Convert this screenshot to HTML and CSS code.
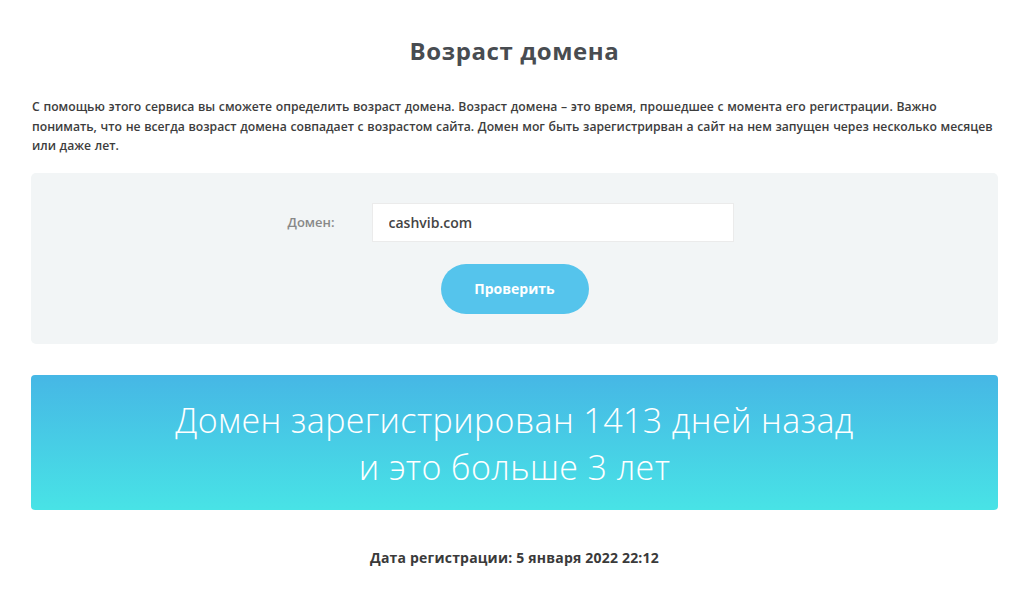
FILE: index.html
```html
<!DOCTYPE html>
<html>
 <head>
  <meta charset="utf-8">
  <title>Возраст домена</title>
  <meta name="viewport" content="width=device-width, initial-scale=1.0">
  <link rel="stylesheet" href="styles.css">
 </head>
<body>

<div class="page">

  <h1 class="title">Возраст домена</h1>

  <p class="intro">С помощью этого сервиса вы сможете определить возраст домена. Возраст домена – это время, прошедшее с момента его регистрации. Важно понимать, что не всегда возраст домена совпадает с возрастом сайта. Домен мог быть зарегистрирван а сайт на нем запущен через несколько месяцев или даже лет.</p>

  <form class="check-form" onsubmit="return false">
    <div class="form-row">
      <label for="domain">Домен:</label>
      <input type="text" id="domain" name="domain" value="cashvib.com">
    </div>
    <button type="submit" class="check-btn">Проверить</button>
  </form>

  <div class="result">
    <p>Домен зарегистрирован 1413 дней назад<br>и это больше 3 лет</p>
  </div>

  <p class="reg-date">Дата регистрации: 5 января 2022 22:12</p>

</div>

</body>
</html>
```

FILE: styles.css
```css
* {
  box-sizing: border-box;
}

body {
  margin: 0;
  font-family: "Open Sans", Arial, sans-serif;
  color: #333;
  background: #fff;
}

.page {
  width: 967px;
  margin-left: 31px;
  padding-bottom: 20px;
}

/* heading */
.title {
  margin: 0;
  padding-top: 36px;
  text-align: center;
  font-size: 24px;
  line-height: 30px;
  font-weight: 700;
  letter-spacing: 0.6px;
  color: #484c51;
}

.intro {
  margin: 31px 0 0 1px;
  font-size: 12.2px;
  line-height: 19.5px;
  font-weight: 600;
  word-spacing: 0.5px;
  color: #3d3d3d;
}

/* form box */
.check-form {
  margin-top: 17px;
  background: #f2f5f6;
  border-radius: 5px;
  padding: 30px 0 30px 0;
  display: flex;
  flex-direction: column;
  align-items: center;
}

.form-row {
  display: flex;
  align-items: center;
  margin-left: -8px;
}

.form-row label {
  width: 84px;
  font-size: 13px;
  color: #888;
  font-weight: 600;
}

.form-row input {
  width: 362px;
  height: 39px;
  border: 1px solid #ebebeb;
  background: #fff;
  padding: 0 16px;
  font-family: inherit;
  font-size: 14px;
  font-weight: 600;
  color: #444;
  outline: none;
}

.check-btn {
  margin-top: 22px;
  width: 148px;
  height: 50px;
  border: none;
  border-radius: 25px;
  background: #55c4ec;
  color: #fff;
  font-family: inherit;
  font-size: 14px;
  font-weight: 700;
  cursor: pointer;
}

/* result banner */
.result {
  margin-top: 31px;
  height: 135px;
  border-radius: 4px;
  background: linear-gradient(to bottom, #46b7e5, #48e3e6);
  display: flex;
  align-items: center;
  justify-content: center;
}

.result p {
  margin: 0;
  padding-top: 4px;
  text-align: center;
  color: #fff;
  font-size: 34px;
  line-height: 47px;
  letter-spacing: 0.4px;
  font-weight: 300;
}

.reg-date {
  margin: 38px 0 0 0;
  text-align: center;
  font-size: 14px;
  font-weight: 700;
  letter-spacing: 0.2px;
  color: #3a3a3a;
}
```
